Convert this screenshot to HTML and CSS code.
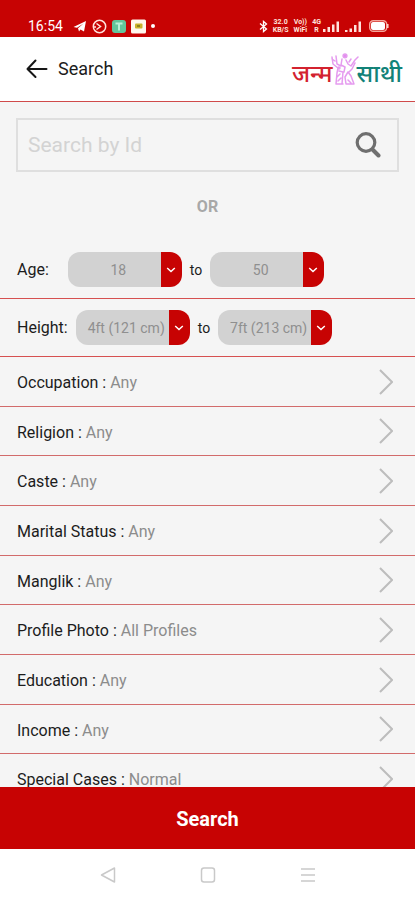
FILE: index.html
```html
<!DOCTYPE html>
<html lang="en">
<head>
<meta charset="utf-8">
<meta name="viewport" content="width=device-width, initial-scale=1">
<title>Search</title>
<link rel="stylesheet" href="styles.css">
</head>
<body>
<div class="screen">
  <div class="status">
    <div class="status-left">
      <span class="clock">16:54</span>
      <svg width="14" height="14" viewBox="0 0 14 14"><path d="M0.5 8 13 2 11 12.500 7.500 10.500 6 12.500 5 9.200 10.500 4.500 4 8.800Z" fill="#fff"/></svg>
      <svg width="15" height="15" viewBox="0 0 15 15" fill="none" stroke="#ffe3dd" stroke-width="1.500"><circle cx="7.500" cy="7.500" r="6.200"/><path d="M4.500 4.500 8.500 7.500 4.500 10.500M1.500 8H4"/></svg>
      <svg width="14" height="15" viewBox="0 0 14 15"><rect y="1" width="14" height="13" rx="3" fill="#62c69c"/><path d="M3.500 4.500H10.500M7 4.500V11.500" stroke="#b9f0d8" stroke-width="2" fill="none"/></svg>
      <svg class="note" width="15" height="15" viewBox="0 0 15 15"><rect y="0.500" width="15" height="14" rx="1.500" fill="#fff8ee"/><rect x="4" y="4.500" width="7.500" height="5" rx="1" fill="#c9b22c"/><rect x="6" y="6" width="3" height="2" fill="#8d8420"/></svg>
      <span class="dot"></span>
    </div>
    <div class="status-right">
      <svg width="9" height="13" viewBox="0 0 9 13" fill="none" stroke="#fff" stroke-width="1.300"><path d="M1 3.500 7.500 9 4.500 11.500V1.500L7.500 4 1 9.500"/></svg>
      <div class="tiny"><span>32.0</span><span>KB/S</span></div>
      <div class="tiny"><span>Vo))</span><span>WiFi</span></div>
      <div class="tiny"><span>4G</span><span>R</span></div>
      <svg class="bars" width="17" height="13" viewBox="0 0 17 13" fill="#ffe3dd"><path d="M0 9H2.500V12H0ZM4.500 7H7V12H4.500ZM9 4.500H11.500V12H9ZM13.500 1.500H16V12H13.500Z"/></svg>
      <svg width="17" height="13" viewBox="0 0 17 13" fill="#ffe3dd"><path d="M0 10H2.500V12H0ZM4.500 8.500H7V12H4.500ZM9 5H11.500V12H9ZM13.500 1.500H16V12H13.500Z"/></svg>
      <svg class="battery" width="20" height="12" viewBox="0 0 20 12"><rect x="0.700" y="0.700" width="17" height="10.600" rx="3.500" fill="none" stroke="#f5a59a" stroke-width="1.400"/><rect x="2" y="2" width="14" height="8" rx="2" fill="#fff"/><path d="M18.800 4V8" stroke="#ffd5cc" stroke-width="1.500"/></svg>
    </div>
  </div>

  <header class="header">
    <button class="back" type="button" aria-label="Back">
      <svg width="22" height="20" viewBox="0 0 22 20" fill="none" stroke="#161616" stroke-width="2" stroke-linecap="round" stroke-linejoin="round"><path d="M9.500 1.500 1.500 10 9.500 18M1.500 10H20.500"/></svg>
    </button>
    <h1>Search</h1>
    <div class="logo" lang="hi">
      <span class="logo-a">जन्म</span>
      <svg width="28" height="33" viewBox="0 0 28 33" fill="none" stroke="#e59bef" stroke-width="1.500" stroke-linecap="round" stroke-linejoin="round"><path d="M1 4 2 11 7 15 6 20 5 31H12M1 6 4 8M5 3 6 11 10 13M11 6 10 12 14 14 13 19M15 7 17 11 20 13 24 7 27 4M18 9 20 6M24 10 21 16 18 19M8 18 12 19 11 31M17 19 14 24 15 31H23L20 23 17 19M6 24 9 21M7 28 10 25M17 27 20 30"/><circle cx="14" cy="2.800" r="1.900" fill="#e28cee"/><circle cx="8" cy="15" r="1"/></svg>
      <span class="logo-b">साथी</span>
    </div>
  </header>

  <main class="content">
    <form class="filters" id="filters">
      <div class="searchbox">
        <input type="text" placeholder="Search by Id" aria-label="Search by Id">
        <button type="button" aria-label="Find">
          <svg width="26" height="26" viewBox="0 0 26 26" fill="none" stroke="#6f6f6f"><circle cx="11" cy="10.500" r="8.800" stroke-width="3.200"/><path d="M17.500 17.500 23.500 23.500" stroke-width="4" stroke-linecap="round"/></svg>
        </button>
      </div>
      <p class="or">OR</p>
      <div class="range age">
        <label for="age-min">Age:</label>
        <span class="pick"><select id="age-min"><option>18</option></select><svg width="10" height="6" viewBox="0 0 10 6"><path d="M1.200 1 5 4.500 8.800 1"/></svg></span>
        <label class="to" for="age-max">to</label>
        <span class="pick"><select id="age-max"><option>50</option></select><svg width="10" height="6" viewBox="0 0 10 6"><path d="M1.200 1 5 4.500 8.800 1"/></svg></span>
      </div>
      <div class="range">
        <label for="height-min">Height:</label>
        <span class="pick"><select id="height-min"><option>4ft (121 cm)</option></select><svg width="10" height="6" viewBox="0 0 10 6"><path d="M1.200 1 5 4.500 8.800 1"/></svg></span>
        <label class="to" for="height-max">to</label>
        <span class="pick"><select id="height-max"><option>7ft (213 cm)</option></select><svg width="10" height="6" viewBox="0 0 10 6"><path d="M1.200 1 5 4.500 8.800 1"/></svg></span>
      </div>
    </form>
    <ul class="options">
      <li><a href="#occupation"><span>Occupation : <em>Any</em></span><svg width="14" height="26" viewBox="0 0 14 26"><path d="M1 1 13 13 1 25"/></svg></a></li>
      <li><a href="#religion"><span>Religion : <em>Any</em></span><svg width="14" height="26" viewBox="0 0 14 26"><path d="M1 1 13 13 1 25"/></svg></a></li>
      <li><a href="#caste"><span>Caste : <em>Any</em></span><svg width="14" height="26" viewBox="0 0 14 26"><path d="M1 1 13 13 1 25"/></svg></a></li>
      <li><a href="#marital"><span>Marital Status : <em>Any</em></span><svg width="14" height="26" viewBox="0 0 14 26"><path d="M1 1 13 13 1 25"/></svg></a></li>
      <li><a href="#manglik"><span>Manglik : <em>Any</em></span><svg width="14" height="26" viewBox="0 0 14 26"><path d="M1 1 13 13 1 25"/></svg></a></li>
      <li><a href="#photo"><span>Profile Photo : <em>All Profiles</em></span><svg width="14" height="26" viewBox="0 0 14 26"><path d="M1 1 13 13 1 25"/></svg></a></li>
      <li><a href="#education"><span>Education : <em>Any</em></span><svg width="14" height="26" viewBox="0 0 14 26"><path d="M1 1 13 13 1 25"/></svg></a></li>
      <li><a href="#income"><span>Income : <em>Any</em></span><svg width="14" height="26" viewBox="0 0 14 26"><path d="M1 1 13 13 1 25"/></svg></a></li>
      <li><a href="#special"><span>Special Cases : <em>Normal</em></span><svg width="14" height="26" viewBox="0 0 14 26"><path d="M1 1 13 13 1 25"/></svg></a></li>
    </ul>
  </main>

  <button class="submit" type="submit" form="filters">Search</button>

  <nav class="system">
    <button type="button" aria-label="System back"><svg width="16" height="18" viewBox="0 0 16 18"><path d="M14.500 2V16L1.500 9Z"/></svg></button>
    <button type="button" aria-label="Home"><svg width="16" height="18" viewBox="0 0 16 18"><rect x="1.500" y="2" width="13" height="14" rx="2.500"/></svg></button>
    <button type="button" aria-label="Recent apps"><svg width="16" height="18" viewBox="0 0 16 18"><path d="M1 3H15M1 9H15M1 15H15"/></svg></button>
  </nav>
</div>
</body>
</html>
```
FILE: styles.css
```css
* { box-sizing: border-box; }

body {
  margin: 0;
  font-family: Roboto, "Noto Sans", sans-serif;
  font-size: 16px;
  color: #1c1c1c;
  background: #f5f5f5;
}

button {
  padding: 0;
  border: 0;
  background: none;
  font: inherit;
  color: inherit;
}

svg { display: block; flex: none; }

.screen {
  display: flex;
  flex-direction: column;
  height: 100vh;
}

.status {
  flex: none;
  display: flex;
  justify-content: space-between;
  align-items: flex-end;
  padding: 18px 26px 3px 28px;
  color: #fff;
  background: #c70303;
}

.status-left,
.status-right {
  display: flex;
  align-items: center;
  height: 16px;
}

.status-left { gap: 5px; }
.clock { margin-right: 5px; font-size: 14px; line-height: 16px; }
.dot { width: 4px; height: 4px; border-radius: 50%; background: #fff; }
.status-right { gap: 5px; }

.tiny {
  display: flex;
  flex-direction: column;
  align-items: center;
  font-size: 7px;
  line-height: 8px;
  font-weight: 700;
  color: #ffe3dd;
}

.bars { margin-left: -3px; }
.battery { margin-left: 2px; }

.header {
  flex: none;
  display: flex;
  align-items: center;
  height: 65px;
  padding: 0 13px 0 26px;
  background: #fff;
  border-bottom: 1px solid #d04a4a;
}

.header h1 {
  flex: 1;
  margin: 0 0 0 10px;
  font-size: 18px;
  line-height: 24px;
  font-weight: 400;
}

.logo {
  display: flex;
  align-items: center;
  font-size: 24px;
  line-height: 30px;
  font-weight: 500;
}

.logo span { padding-top: 10px; }
.logo svg { margin: 0 -2px; }
.logo-a { color: #d3222f; }
.logo-b { color: #128278; }

.content {
  flex: 1;
  min-height: 0;
  overflow: hidden;
}

.searchbox {
  display: flex;
  align-items: center;
  height: 54px;
  margin: 16px 16px 0;
  padding: 0 16px 0 10px;
  border: 2px solid #dfdfdf;
}

.searchbox input {
  flex: 1;
  min-width: 0;
  padding: 0;
  border: 0;
  outline: 0;
  background: none;
  font: inherit;
  font-size: 21px;
  color: #555;
}

.searchbox input::placeholder { color: #d3d3d3; opacity: 1; }

.or {
  margin: 25px 0 24px;
  font-size: 16px;
  line-height: 20px;
  font-weight: 700;
  text-align: center;
  color: #a8a8a8;
}

.range {
  display: flex;
  align-items: center;
  gap: 8px;
  height: 58px;
  padding: 0 17px;
  border-bottom: 1px solid #d65050;
}

.age label:first-child { margin-right: 11px; }
.range .to { font-size: 14px; }

.pick {
  position: relative;
  display: flex;
  width: 114px;
  height: 35px;
  border-radius: 12px;
  overflow: hidden;
}

.pick select {
  appearance: none;
  width: 100%;
  padding: 0 21px 0 8px;
  border: 0;
  border-radius: 0;
  font: inherit;
  font-size: 14px;
  color: #8f8f8f;
  text-align-last: center;
  background: linear-gradient(to left, #c70303 21px, #d2d2d2 21px);
}

.pick svg {
  position: absolute;
  right: 6px;
  top: 15px;
  fill: none;
  stroke: #fff;
  stroke-width: 1.5;
  pointer-events: none;
}

.options {
  margin: 0;
  padding: 0;
  list-style: none;
}

.options li {
  height: 50px;
  border-bottom: 1px solid #d26b6b;
}

.options li:nth-child(3n + 2) { height: 49px; }

.options a {
  display: flex;
  justify-content: space-between;
  align-items: center;
  height: 100%;
  padding: 0 22px 0 17px;
  color: inherit;
  text-decoration: none;
}

.options a span { padding-top: 2px; }
.options em { font-style: normal; color: #8c8c8c; }
.options svg { fill: none; stroke: #bdbdbd; stroke-width: 2; }

.submit {
  flex: none;
  height: 62px;
  padding-top: 2px;
  font-size: 20px;
  font-weight: 700;
  color: #fff;
  background: #c70303;
}

.system {
  flex: none;
  display: flex;
  justify-content: center;
  align-items: center;
  gap: 84px;
  height: 51px;
  background: #fff;
}

.system svg {
  fill: none;
  stroke: #c9c9c9;
  stroke-width: 1.5;
  stroke-linejoin: round;
}
```
